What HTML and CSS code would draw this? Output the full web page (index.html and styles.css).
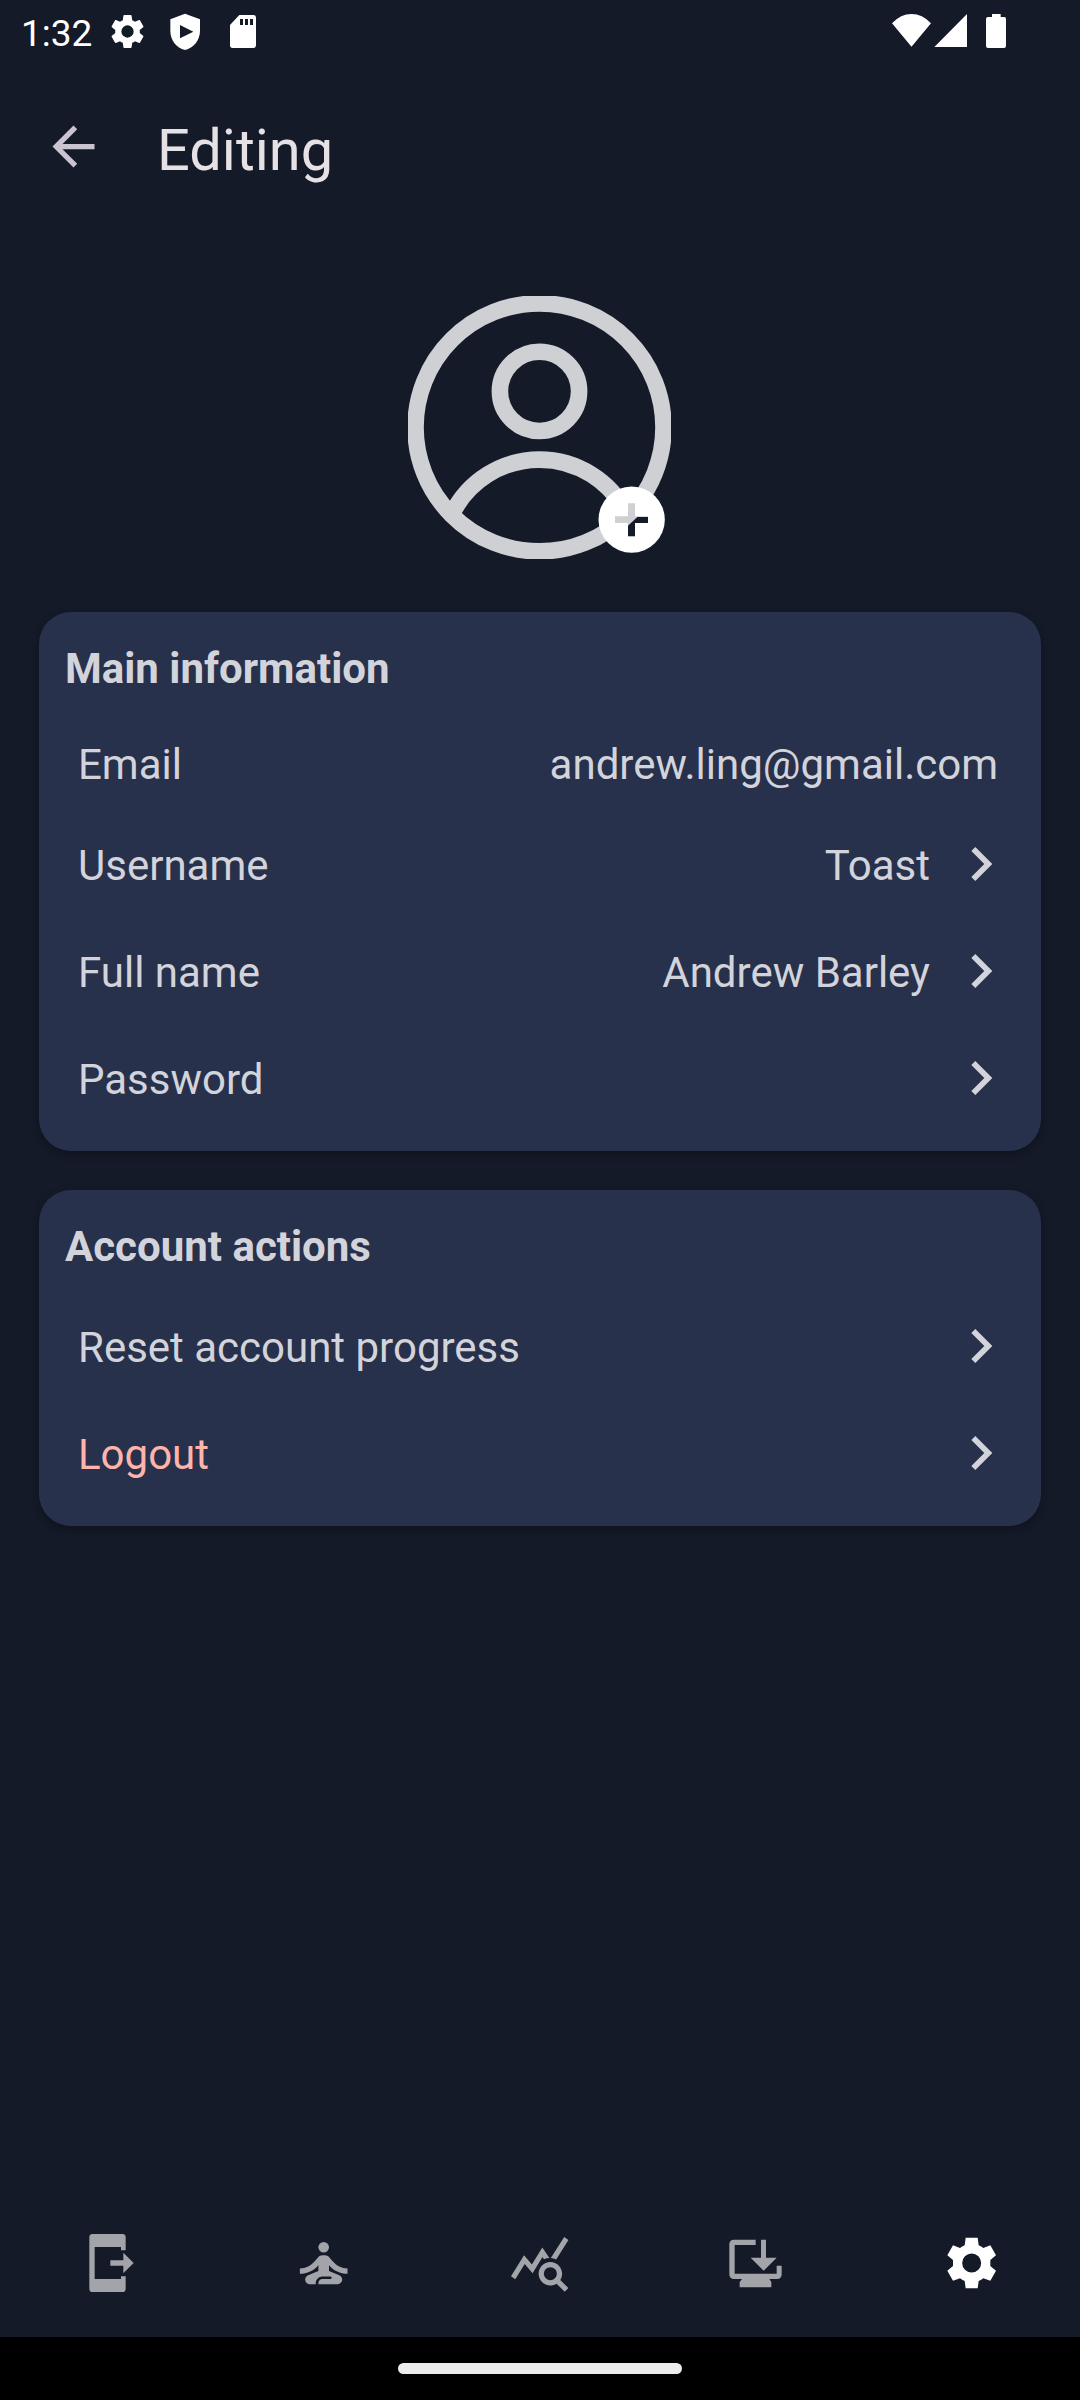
FILE: index.html
```html
<!DOCTYPE html>
<html lang="en">
<head>
<meta charset="utf-8">
<title>Editing</title>
<link rel="stylesheet" href="styles.css">
</head>
<body>
<svg class="defs" width="0" height="0" aria-hidden="true">
  <symbol id="chevron" viewBox="0 0 24 24"><path d="M10 6 8.59 7.41 13.17 12l-4.58 4.59L10 18l6-6z"/></symbol>
</svg>
<div class="screen">
  <div class="status">
    <span class="clock">1:32</span>
    <svg class="status-gear" viewBox="0 0 24 24"><path d="M19.14 12.94c.04-.3.06-.61.06-.94 0-.32-.02-.64-.07-.94l2.03-1.58c.18-.14.23-.41.12-.61l-1.92-3.32c-.12-.22-.37-.29-.59-.22l-2.39.96c-.5-.38-1.03-.7-1.62-.94l-.36-2.54c-.04-.24-.24-.41-.48-.41h-3.84c-.24 0-.43.17-.47.41l-.36 2.54c-.59.24-1.13.57-1.62.94l-2.39-.96c-.22-.08-.47 0-.59.22L2.74 8.87c-.12.21-.08.47.12.61l2.03 1.58c-.05.3-.09.63-.09.94s.02.64.07.94l-2.03 1.58c-.18.14-.23.41-.12.61l1.92 3.32c.12.22.37.29.59.22l2.39-.96c.5.38 1.03.7 1.62.94l.36 2.54c.05.24.24.41.48.41h3.84c.24 0 .44-.17.47-.41l.36-2.54c.59-.24 1.13-.56 1.62-.94l2.39.96c.22.08.47 0 .59-.22l1.92-3.32c.12-.22.07-.47-.12-.61zM12 15.6A3.6 3.6 0 1 1 12 8.4a3.6 3.6 0 0 1 0 7.2z"/></svg>
    <svg class="status-shield" viewBox="510 39 90 114"><path fill-rule="evenodd" d="M555 41 600 58V92C600 121 581 143 555 150 529 143 511 121 511 92V58ZM540 75V115L580 95Z"/></svg>
    <svg class="status-card" viewBox="690 39 78 114"><path fill-rule="evenodd" d="M718 45H760Q768 45 768 53V136Q768 144 760 144H698Q690 144 690 136V75ZM720 57V75H729V57ZM735 57V75H744V57ZM750 57V75H759V57Z"/></svg>
    <svg class="status-signal" viewBox="96 39 345 108"><path d="M96 70Q122 42 154.500 42T213 70L154.500 140ZM321 42V141H223ZM396 42H422V51H433Q438 51 438 57V138Q438 144 432 144H384Q378 144 378 138V57Q378 51 384 51H396Z"/></svg>
  </div>

  <header class="header">
    <svg class="back" viewBox="0 0 24 24"><path d="M20 11H7.830l5.590-5.590L12 4l-8 8 8 8 1.410-1.410L7.830 13H20z"/></svg>
    <h1 class="title">Editing</h1>
  </header>

  <div class="profile">
    <svg class="avatar" viewBox="54 47 789 789">
      <g class="avatar-lines">
        <circle cx="448.500" cy="441" r="372"/>
        <circle cx="448.500" cy="333" r="118.800"/>
        <path d="M184.800 703.400A292.800 292.800 0 0 1 712.200 703.400"/>
      </g>
      <circle class="badge" cx="725" cy="718" r="99.500"/>
      <path class="plus-light" d="M714 669H735V708H774V728H735V768H714V728H675V708H714Z"/>
      <path class="plus-dark" d="M742 710H774V728H735V768H714V736Z"/>
    </svg>
  </div>

  <main class="cards">
    <section class="card">
      <h2 class="card-title">Main information</h2>
      <div class="row row-static"><span>Email</span><span class="value">andrew.ling@gmail.com</span></div>
      <div class="row"><span>Username</span><span class="value">Toast</span><svg class="chevron"><use href="#chevron"/></svg></div>
      <div class="row"><span>Full name</span><span class="value">Andrew Barley</span><svg class="chevron"><use href="#chevron"/></svg></div>
      <div class="row"><span>Password</span><span class="value"></span><svg class="chevron"><use href="#chevron"/></svg></div>
    </section>
    <section class="card">
      <h2 class="card-title card-title-short">Account actions</h2>
      <div class="row"><span>Reset account progress</span><span class="value"></span><svg class="chevron"><use href="#chevron"/></svg></div>
      <div class="row"><span class="danger">Logout</span><span class="value"></span><svg class="chevron"><use href="#chevron"/></svg></div>
    </section>
  </main>

  <nav class="tabs">
    <a class="tab"><svg viewBox="45 91 198 198"><path d="M98 103H187Q197 103 197 113V152H183V142H104V238H183V230H197V267Q197 277 187 277H98Q88 277 88 267V113Q88 103 98 103ZM151 182H190V159L221 190 190 221V198H151Z"/></svg></a>
    <a class="tab"><svg viewBox="693 91 198 198"><g transform="translate(695.8 95.200) scale(7.940)"><circle cx="12" cy="6" r="2"/><path d="M21 16v-2c-2.240 0-4.160-.960-5.600-2.680l-1.340-1.600C13.680 9.260 13.120 9 12.530 9h-1.050c-.6 0-1.150.260-1.530.720l-1.340 1.600C7.160 13.040 5.240 14 3 14v2c2.770 0 5.190-1.170 7-3.250V15l-3.880 1.550C5.450 16.820 5 17.480 5 18.210 5 19.200 5.800 20 6.790 20H9v-.5C9 18.120 10.120 17 11.500 17h3c.28 0 .5.220.5.500s-.22.500-.5.500h-3c-.83 0-1.500.670-1.500 1.500v.5h7.100c.99 0 1.900-.8 1.900-1.790 0-.73-.45-1.390-1.120-1.660L14 15v-2.250c1.810 2.080 4.230 3.250 7 3.250z"/></g></svg></a>
    <a class="tab"><svg viewBox="81 91 198 198"><g transform="translate(85.200 96.300) scale(7.830)"><path d="M19.880 18.470c.44-.7.7-1.510.7-2.390 0-2.490-2.010-4.500-4.500-4.500s-4.500 2.010-4.500 4.500 2.010 4.500 4.490 4.500c.88 0 1.700-.26 2.390-.7L21.580 23 23 21.580zM16.080 18.580a2.500 2.500 0 1 1 0-5 2.500 2.500 0 0 1 0 5zM15.720 10.080c-.74.020-1.450.180-2.100.450l-.55-.83-3.800 6.180-3.010-3.520-3.630 5.810L1 17l5-8 3 3.500L13 6zM18.310 10.580c-.64-.28-1.330-.45-2.050-.49L21.380 2 23 3.180z"/></g></svg></a>
    <a class="tab"><svg viewBox="729 91 198 198"><path d="M827 120V136H764V222H890V198H905V224Q905 238 891 238H868L874 247V263H779V247L786 238H762Q748 238 748 224V134Q748 120 762 120ZM843 120H858V174H890L851 213 812 174H843Z"/></svg></a>
    <a class="tab tab-active"><svg viewBox="177 91 198 198"><path fill-rule="evenodd" d="M257 114H293L296 137Q304 140 310 145L331 137 348 167 331 181V199L348 213 331 243 310 236Q304 241 296 244L293 266H257L254 244Q246 241 240 236L219 243 202 213 219 199V181L202 167 219 137 240 145Q246 140 254 137ZM275 161.500A28.500 28.500 0 1 0 275 218.500A28.500 28.500 0 1 0 275 161.500Z"/></svg></a>
  </nav>
  <div class="system-nav"><div class="pill"></div></div>
</div>
</body>
</html>
```
FILE: styles.css
```css
* { box-sizing: border-box; }
body { margin: 0; background: #141a28; font-family: Roboto, sans-serif; }
.defs { display: block; }
.screen { width: 1080px; height: 2400px; display: flex; flex-direction: column; overflow: hidden; }

.status { height: 64px; flex: none; display: flex; align-items: flex-start; padding: 13px 73px 0 21px; fill: #fff; color: #fff; }
.clock { width: 86px; margin-top: 1px; font-size: 37px; line-height: 40px; }
.status-gear { width: 41px; height: 41px; margin-top: -2px; }
.status-shield { width: 30px; height: 38px; margin-left: 22px; }
.status-card { width: 26px; height: 38px; margin-left: 30px; }
.status-signal { width: 115px; height: 36px; margin-left: auto; }

.header { height: 168px; flex: none; display: flex; align-items: center; padding: 0 42px 4px; }
.back { width: 63px; height: 63px; fill: #cac4d0; }
.title { margin: 8px 0 0 52px; font-size: 57.75px; font-weight: 400; line-height: 72px; color: #e6e1e5; }

.profile { height: 380px; flex: none; display: flex; justify-content: center; padding: 64px 1px 0 0; }
.avatar { width: 263px; height: 263px; }
.avatar-lines { fill: none; stroke: #cfd0d4; stroke-width: 49.8; }
.badge { fill: #fff; }
.plus-light { fill: #cfd0d4; }
.plus-dark { fill: #141a28; }

.cards { flex: 1; display: flex; flex-direction: column; gap: 39px; padding: 0 39px; }
.card { padding: 8px 26px 18px; border-radius: 32px; background: #28314b; color: #d3d4db; box-shadow: 0 3px 8px rgba(0, 0, 0, .3); font-size: 42px; }
.card-title { margin: 0; height: 97px; line-height: 97px; font-size: 42px; font-weight: 700; }
.card-title-short { height: 96px; }
.row { height: 107px; display: flex; align-items: center; padding: 0 0 0 13px; }
.row-static { height: 95px; padding: 0 17px 0 13px; }
.value { margin-left: auto; }
.chevron { width: 68px; height: 68px; margin: -3px 0 0 17px; fill: #d3d4db; }
.danger { color: #ffb4ab; }

.tabs { height: 147px; flex: none; display: grid; grid-template-columns: repeat(5, 1fr); place-items: center; padding-bottom: 1px; fill: #a3a4a9; }
.tab { display: flex; }
.tab svg { width: 66px; height: 66px; }
.tab-active { fill: #fff; }
.system-nav { height: 63px; flex: none; display: flex; align-items: center; justify-content: center; background: #000; }
.pill { width: 284px; height: 11px; border-radius: 6px; background: #ececec; }
```
